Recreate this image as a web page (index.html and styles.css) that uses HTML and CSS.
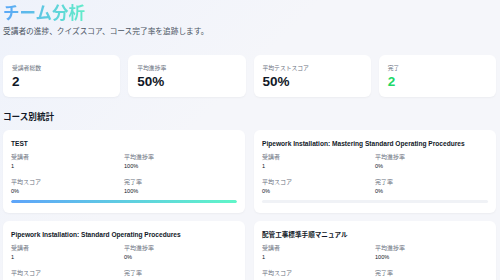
FILE: index.html
```html
<!DOCTYPE html>
<html lang="ja">
<head>
    <meta charset="UTF-8">
    <title>チーム分析</title>
    <link rel="stylesheet" href="styles.css">
</head>
<body>
    <div class="page">
        <h1 class="page-title">チーム分析</h1>
        <p class="page-sub">受講者の進捗、クイズスコア、コース完了率を追跡します。</p>

        <div class="stat-grid">
            <div class="stat-card">
                <div class="stat-label">受講者総数</div>
                <div class="stat-value">2</div>
            </div>
            <div class="stat-card">
                <div class="stat-label">平均進捗率</div>
                <div class="stat-value">50%</div>
            </div>
            <div class="stat-card">
                <div class="stat-label">平均テストスコア</div>
                <div class="stat-value">50%</div>
            </div>
            <div class="stat-card">
                <div class="stat-label">完了</div>
                <div class="stat-value green">2</div>
            </div>
        </div>

        <h2 class="section-title">コース別統計</h2>

        <div class="course-grid">
            <div class="course-card">
                <div class="course-title">TEST</div>
                <div class="course-stats">
                    <div><div class="c-label">受講者</div><div class="c-value">1</div></div>
                    <div><div class="c-label">平均進捗率</div><div class="c-value">100%</div></div>
                    <div><div class="c-label">平均スコア</div><div class="c-value">0%</div></div>
                    <div><div class="c-label">完了率</div><div class="c-value">100%</div></div>
                </div>
                <div class="bar"><div class="bar-fill" style="width: 100%"></div></div>
            </div>
            <div class="course-card">
                <div class="course-title">Pipework Installation: Mastering Standard Operating Procedures</div>
                <div class="course-stats">
                    <div><div class="c-label">受講者</div><div class="c-value">1</div></div>
                    <div><div class="c-label">平均進捗率</div><div class="c-value">0%</div></div>
                    <div><div class="c-label">平均スコア</div><div class="c-value">0%</div></div>
                    <div><div class="c-label">完了率</div><div class="c-value">0%</div></div>
                </div>
                <div class="bar"><div class="bar-fill" style="width: 0%"></div></div>
            </div>
            <div class="course-card">
                <div class="course-title">Pipework Installation: Standard Operating Procedures</div>
                <div class="course-stats">
                    <div><div class="c-label">受講者</div><div class="c-value">1</div></div>
                    <div><div class="c-label">平均進捗率</div><div class="c-value">0%</div></div>
                    <div><div class="c-label">平均スコア</div><div class="c-value">0%</div></div>
                    <div><div class="c-label">完了率</div><div class="c-value">0%</div></div>
                </div>
                <div class="bar"><div class="bar-fill" style="width: 0%"></div></div>
            </div>
            <div class="course-card">
                <div class="course-title">配管工事標準手順マニュアル</div>
                <div class="course-stats">
                    <div><div class="c-label">受講者</div><div class="c-value">1</div></div>
                    <div><div class="c-label">平均進捗率</div><div class="c-value">100%</div></div>
                    <div><div class="c-label">平均スコア</div><div class="c-value">0%</div></div>
                    <div><div class="c-label">完了率</div><div class="c-value">100%</div></div>
                </div>
                <div class="bar"><div class="bar-fill" style="width: 100%"></div></div>
            </div>
        </div>
    </div>
</body>
</html>
```

FILE: styles.css
```css
/* Team analytics page */
body {
    margin: 0;
    font-family: 'Liberation Sans', 'Noto Sans CJK JP', sans-serif;
    background: linear-gradient(135deg, #eef2fb 0%, #f5f6fa 40%, #f5f6fa 100%);
    color: #1f2937;
    overflow: hidden;
}

.page {
    padding: 2px 4px 0 3px;
}

.page-title {
    margin: 0;
    font-size: 16.5px;
    line-height: 22px;
    font-weight: 700;
    background: linear-gradient(90deg, #5aa6f8, #62ecc9);
    -webkit-background-clip: text;
    background-clip: text;
    color: transparent;
    display: inline-block;
}

.page-sub {
    margin: 2px 0 0;
    font-size: 7.7px;
    line-height: 12px;
    color: #4b5563;
}

/* Summary cards */
.stat-grid {
    display: grid;
    grid-template-columns: repeat(4, 1fr);
    gap: 8px;
    margin-top: 17px;
}

.stat-card {
    background: #fff;
    border-radius: 6px;
    height: 42px;
    padding: 9px 9px 0;
    box-sizing: border-box;
    box-shadow: 0 1px 2px rgba(0, 0, 0, 0.04);
}

.stat-label {
    font-size: 5.8px;
    line-height: 8px;
    color: #6b7280;
}

.stat-value {
    font-size: 13.5px;
    line-height: 17px;
    font-weight: 700;
    color: #111827;
    margin-top: 1px;
}

.stat-value.green {
    color: #21d866;
}

.section-title {
    margin: 14px 0 0;
    font-size: 8.6px;
    line-height: 12px;
    font-weight: 700;
    color: #111827;
}

/* Course cards */
.course-grid {
    display: grid;
    grid-template-columns: 1fr 1fr;
    gap: 8px 9px;
    margin-top: 7px;
}

.course-card {
    background: #fff;
    border-radius: 6px;
    padding: 9px 8px 10px;
    box-shadow: 0 1px 2px rgba(0, 0, 0, 0.04);
}

.course-title {
    font-size: 6.6px;
    line-height: 9px;
    font-weight: 700;
    color: #111827;
    white-space: nowrap;
}

.course-title:lang(ja) {
    font-size: 6.6px;
}

.course-stats {
    display: grid;
    grid-template-columns: 1fr 1fr;
    row-gap: 7px;
    margin-top: 5px;
}

.c-label {
    font-size: 6px;
    line-height: 9px;
    color: #6b7280;
}

.c-value {
    font-size: 5.6px;
    line-height: 9px;
    color: #111827;
}

.bar {
    margin-top: 4px;
    height: 3px;
    border-radius: 2px;
    background: #f0f2f6;
    overflow: hidden;
}

.bar-fill {
    height: 100%;
    border-radius: 2px;
    background: linear-gradient(90deg, #5ea4fa, #60f6c8);
}
```
